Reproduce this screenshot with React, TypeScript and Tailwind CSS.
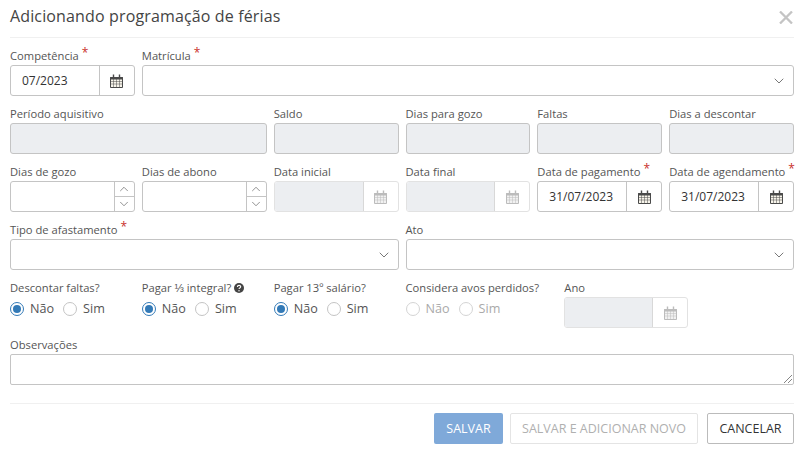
import { ChevronDown, ChevronUp } from 'lucide-react'

function CalendarIcon({ muted }: { muted?: boolean }) {
  const color = muted ? '#bcbcbc' : '#4a4a4a'
  return (
    <svg width="13" height="14" viewBox="0 0 13 14" fill="none" stroke={color} strokeWidth="1">
      <path d="M.5 3.500h12v10H.5z" fill={muted ? '#f1f1f1' : '#f7f4ea'} />
      <path d="M.5 3.500h12v1.500H.5z" fill={color} />
      <path d="M.5 7.500h12M.5 10h12M3.500 5v8M6.500 5v8M9.500 5v8" strokeWidth="0.5" />
      <path d="M3.500 .5v3M9.500 .5v3" strokeWidth="1.400" />
    </svg>
  )
}

function Field({ label, required, help, className, children }: { label: string; required?: boolean; help?: boolean; className?: string; children?: React.ReactNode }) {
  return (
    <div className={className}>
      <div className="flex h-[19px] items-start pt-[1px] text-[11.2px] leading-[18px] text-[#555555] whitespace-nowrap">
        {label}
        {required && <span className="ml-[3px] -mt-[3px] text-[12px] text-[#c9302c]">*</span>}
        {help && (
          <svg className="ml-[3px] mt-[4px]" width="10" height="10" viewBox="0 0 10 10">
            <circle cx="5" cy="5" r="5" fill="#444444" />
            <path d="M3.400 3.900c0-2 3.300-2 3.300-.1 0 1.200-1.700 1.100-1.700 2.300" fill="none" stroke="#ffffff" strokeWidth="1.100" />
            <circle cx="5" cy="7.700" r=".7" fill="#ffffff" />
          </svg>
        )}
      </div>
      {children}
    </div>
  )
}

function TextBox({ value, disabled }: { value?: string; disabled?: boolean }) {
  return (
    <div className={`h-[31px] rounded-[3px] border border-[#c4c4c4] ${disabled ? 'bg-[#eceef1]' : 'bg-white'} text-[12px] leading-[29px] text-[#333333]`}>
      {value}
    </div>
  )
}

function DateBox({ value, disabled }: { value?: string; disabled?: boolean }) {
  return (
    <div className={`flex h-[31px] rounded-[3px] border ${disabled ? 'border-[#e2e2e2]' : 'border-[#c4c4c4]'} bg-white`}>
      <div className={`flex-1 rounded-l-[2px] border-r ${disabled ? 'border-[#d8d8d8] bg-[#eceef1]' : 'border-[#c4c4c4]'} pl-[11px] text-[12px] leading-[29px] text-[#333333]`}>
        {value}
      </div>
      <div className="flex w-[34px] items-center justify-center">
        <CalendarIcon muted={disabled} />
      </div>
    </div>
  )
}

function NumberBox() {
  return (
    <div className="flex h-[31px] rounded-[3px] border border-[#c4c4c4] bg-white">
      <div className="flex-1" />
      <div className="flex w-[20px] flex-col border-l border-[#c4c4c4]">
        <div className="flex flex-1 items-center justify-center border-b border-[#c4c4c4]">
          <ChevronUp size={14} strokeWidth={1.1} color="#555555" />
        </div>
        <div className="flex flex-1 items-center justify-center">
          <ChevronDown size={14} strokeWidth={1.1} color="#555555" />
        </div>
      </div>
    </div>
  )
}

function SelectBox() {
  return (
    <div className="flex h-[31px] items-center justify-end rounded-[3px] border border-[#c4c4c4] bg-white pr-[6px]">
      <ChevronDown size={16} strokeWidth={1.2} color="#555555" />
    </div>
  )
}

function Radio({ label, checked, disabled }: { label: string; checked?: boolean; disabled?: boolean }) {
  return (
    <span className={`flex items-center gap-[6px] text-[12.6px] ${disabled ? 'text-[#aaaaaa]' : 'text-[#555555]'}`}>
      <span className={`flex h-[14px] w-[14px] items-center justify-center rounded-full border ${checked ? 'border-[#337ab7]' : disabled ? 'border-[#d4d4d4]' : 'border-[#c4c4c4]'} bg-white`}>
        {checked && <span className="h-[8px] w-[8px] rounded-full bg-[#337ab7]" />}
      </span>
      {label}
    </span>
  )
}

function YesNo({ checked, disabled }: { checked?: boolean; disabled?: boolean }) {
  return (
    <div className="flex h-[31px] items-center gap-[9px] pb-[6px]">
      <Radio label="Não" checked={checked} disabled={disabled} />
      <Radio label="Sim" disabled={disabled} />
    </div>
  )
}

export default function App() {
  return (
    <div className="h-[450px] w-[802px] overflow-hidden bg-white pl-[10px] pr-[8px] font-['Open_Sans',sans-serif]">
      {/* cabeçalho */}
      <div className="flex h-[38px] items-start justify-between border-b border-[#f0f0f0]">
        <h1 className="pt-[4px] text-[16px] leading-[24px] tracking-[0.14px] text-[#444444]">Adicionando programação de férias</h1>
        <svg className="mt-[11px] mr-[1px]" width="14" height="13" viewBox="0 0 14 13" stroke="#c4c4c4" strokeWidth="2.300">
          <path d="M1 .5l12 12M13 .5l-12 12" />
        </svg>
      </div>

      <div className="grid grid-cols-6 gap-x-[7px] gap-y-[8px] pt-[8px]">
        <Field label="Competência" required><DateBox value="07/2023" /></Field>
        <Field label="Matrícula" required className="col-span-5"><SelectBox /></Field>

        <Field label="Período aquisitivo" className="col-span-2"><TextBox disabled /></Field>
        <Field label="Saldo"><TextBox disabled /></Field>
        <Field label="Dias para gozo"><TextBox disabled /></Field>
        <Field label="Faltas"><TextBox disabled /></Field>
        <Field label="Dias a descontar"><TextBox disabled /></Field>

        <Field label="Dias de gozo"><NumberBox /></Field>
        <Field label="Dias de abono"><NumberBox /></Field>
        <Field label="Data inicial"><DateBox disabled /></Field>
        <Field label="Data final"><DateBox disabled /></Field>
        <Field label="Data de pagamento" required><DateBox value="31/07/2023" /></Field>
        <Field label="Data de agendamento" required><DateBox value="31/07/2023" /></Field>

        <Field label="Tipo de afastamento" required className="col-span-3"><SelectBox /></Field>
        <Field label="Ato" className="col-span-3"><SelectBox /></Field>

        <Field label="Descontar faltas?"><YesNo checked /></Field>
        <Field label="Pagar ⅓ integral?" help><YesNo checked /></Field>
        <Field label="Pagar 13º salário?"><YesNo checked /></Field>
        <Field label="Considera avos perdidos?"><YesNo disabled /></Field>
        <Field label="Ano" className="ml-[27px] -mr-[26px]"><DateBox disabled /></Field>
        <div />

        <Field label="Observações" className="col-span-6 -mt-[1px]">
          <div className="relative h-[31px] rounded-[2px] border border-[#c4c4c4] bg-white">
            <svg className="absolute bottom-[1px] right-[1px]" width="8" height="8" viewBox="0 0 8 8" stroke="#666666" strokeWidth="0.8">
              <path d="M0 8L8 0M4 8L8 4" />
            </svg>
          </div>
        </Field>
      </div>

      {/* ações */}
      <div className="mt-[18px] flex justify-end border-t border-[#f0f0f0] pt-[9px] text-[12.5px] leading-[29px]">
        <button className="h-[31px] w-[69px] rounded-[2px] bg-[#7fa9d9] text-white">SALVAR</button>
        <button className="ml-[7px] h-[31px] w-[188px] rounded-[2px] border border-[#e4e4e4] bg-white text-[#b0b0b0]">SALVAR E ADICIONAR NOVO</button>
        <button className="ml-[9px] h-[31px] w-[87px] rounded-[2px] border border-[#bbbbbb] bg-white text-[#333333]">CANCELAR</button>
      </div>
    </div>
  )
}
